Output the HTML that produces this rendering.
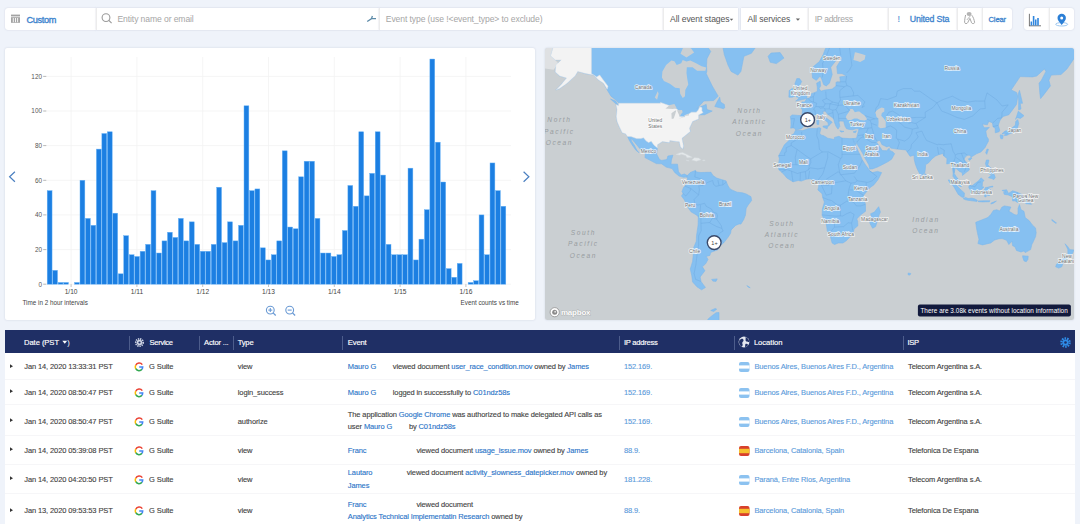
<!DOCTYPE html><html><head><meta charset="utf-8"><style>
*{margin:0;padding:0;box-sizing:border-box}
html,body{width:1080px;height:524px;overflow:hidden;background:#eff3fa;font-family:"Liberation Sans",sans-serif;position:relative}
.abs{position:absolute}
.seg{position:absolute;top:7.5px;height:22px;background:#fff;box-shadow:0 0 1.5px rgba(120,130,160,.35)}
.t{position:absolute;white-space:nowrap;line-height:1}
.panel{position:absolute;background:#fff;border-radius:2px;box-shadow:0 0 2px rgba(120,130,160,.3)}
.hdiv{position:absolute;top:335.5px;width:1px;height:14px;background:#4d5d8c}
.lnk{color:#2a74c8}
.rsep{position:absolute;left:5px;width:1070px;height:1px;background:#f6f6f8}
</style></head><body><div class="seg" style="left:4.6px;width:91px;border-radius:3px 0 0 3px;"></div><div class="seg" style="left:95.6px;width:283.8px;border-radius:0;border-left:1px solid #ececec;"></div><div class="seg" style="left:379.4px;width:283.6px;border-radius:0;border-left:1px solid #ececec;"></div><div class="seg" style="left:663px;width:75px;border-radius:0;border-left:1px solid #ececec;"></div><div class="seg" style="left:741px;width:66.8px;border-radius:0;"></div><div class="seg" style="left:807.8px;width:80.4px;border-radius:0;border-left:1px solid #ececec;"></div><div class="seg" style="left:888.2px;width:68.8px;border-radius:0;border-left:1px solid #ececec;"></div><div class="seg" style="left:957px;width:24.5px;border-radius:0;border-left:1px solid #ececec;"></div><div class="seg" style="left:981.5px;width:30.5px;border-radius:0 3px 3px 0;border-left:1px solid #ececec;"></div><div class="seg" style="left:1023.6px;width:25.1px;border-radius:3px 0 0 3px;"></div><div class="seg" style="left:1048.7px;width:25.3px;border-radius:0 3px 3px 0;border-left:1px solid #ececec;"></div><svg class="abs" style="left:0;top:0" width="1080" height="40" viewBox="0 0 1080 40">
 <rect x="11" y="14.6" width="9" height="1.8" fill="#a3a3a3"/>
 <rect x="11" y="17.2" width="9" height="5.6" fill="#a3a3a3"/>
 <rect x="12.8" y="18" width="0.9" height="4.2" fill="#fff"/><rect x="15" y="18" width="0.9" height="4.2" fill="#fff"/><rect x="17.2" y="18" width="0.9" height="4.2" fill="#fff"/>
 <circle cx="106" cy="17.6" r="3.9" fill="none" stroke="#9a9a9a" stroke-width="1.1"/>
 <line x1="108.8" y1="20.4" x2="111.6" y2="23.2" stroke="#9a9a9a" stroke-width="1.2"/>
 <path d="M367.2,21.5 L371.5,18.6 L376,18.6 M371.5,18.6 L372.4,16" fill="none" stroke="#5c8aa8" stroke-width="1.3"/>
 <path d="M965.6,15 C965,17.5 964.6,20.5 964.6,22.4 C964.6,23.8 967.2,24 967.6,22.8 L969.9,18.4 L971.6,22.8 C972,24 974.6,23.8 974.6,22.4 C974.3,20 973.2,17 971.8,15.2" fill="none" stroke="#a8a8a8" stroke-width="1"/>
 <path d="M966.8,20 L970.6,15.6" stroke="#b0b0b0" stroke-width="0.9"/>
 <ellipse cx="969.1" cy="14" rx="2.5" ry="2" fill="#b3b3b3"/>
 <line x1="1029.4" y1="13.8" x2="1029.4" y2="26.2" stroke="#555" stroke-width="0.8"/>
 <line x1="1029.4" y1="25.8" x2="1041" y2="25.8" stroke="#555" stroke-width="0.8"/>
 <rect x="1030.6" y="21.5" width="1.5" height="4" fill="#2f86de"/>
 <rect x="1032.8" y="16" width="1.6" height="9.5" fill="#2f86de"/>
 <rect x="1035" y="19.5" width="1.5" height="6" fill="#2f86de"/>
 <rect x="1037.2" y="18" width="1.6" height="7.5" fill="#2f86de"/>
 <ellipse cx="1061.7" cy="24.3" rx="6" ry="1.7" fill="none" stroke="#9cc7f0" stroke-width="1"/>
 <path d="M1061.7,25 C1059.5,22 1057.5,20.3 1057.5,18 A4.2,4.2 0 0 1 1065.9,18 C1065.9,20.3 1063.9,22 1061.7,25 Z" fill="#2b7fd6"/>
 <circle cx="1061.7" cy="18" r="1.5" fill="#fff"/>
 <path d="M729.8,18.8 L733.2,18.8 L731.5,20.8Z" fill="#666"/>
 <path d="M795.8,18.4 L800,18.4 L797.9,20.8Z" fill="#666"/>
</svg><div class="t" style="top:15.71px;font-size:9.2px;color:#3c83cd;left:26.40px;letter-spacing:-0.350px;-webkit-text-stroke:0.35px #3c83cd;">Custom</div><div class="t" style="top:14.92px;font-size:8.6px;color:#a6a6a6;left:117.50px;letter-spacing:-0.109px;">Entity name or email</div><div class="t" style="top:14.92px;font-size:8.6px;color:#a6a6a6;left:385.80px;letter-spacing:-0.107px;">Event type (use !&lt;event_type&gt; to exclude)</div><div class="t" style="top:14.92px;font-size:8.6px;color:#555;left:670.10px;letter-spacing:-0.082px;">All event stages</div><div class="t" style="top:14.92px;font-size:8.6px;color:#555;left:747.60px;letter-spacing:-0.074px;">All services</div><div class="t" style="top:14.92px;font-size:8.6px;color:#a6a6a6;left:814.70px;letter-spacing:-0.295px;">IP address</div><div class="t" style="top:14.81px;font-size:9.2px;color:#3c83cd;left:897.60px;">!</div><div class="t" style="top:14.65px;font-size:8.8px;color:#3c83cd;left:909.80px;letter-spacing:-0.169px;-webkit-text-stroke:0.3px #3c83cd;">United Sta</div><div class="t" style="top:15.87px;font-size:7.6px;color:#3c83cd;left:988.50px;letter-spacing:-0.133px;-webkit-text-stroke:0.3px #3c83cd;">Clear</div><div class="panel" style="left:4.6px;top:47.9px;width:530.6px;height:272.3px"></div><svg class="abs" style="left:0;top:0" width="1080" height="330" viewBox="0 0 1080 330" font-family="Liberation Sans, sans-serif"><line x1="47" y1="284.2" x2="511" y2="284.2" stroke="#f2f2f2" stroke-width="0.8"/><line x1="47" y1="249.6" x2="511" y2="249.6" stroke="#f2f2f2" stroke-width="0.8"/><line x1="47" y1="214.9" x2="511" y2="214.9" stroke="#f2f2f2" stroke-width="0.8"/><line x1="47" y1="180.3" x2="511" y2="180.3" stroke="#f2f2f2" stroke-width="0.8"/><line x1="47" y1="145.6" x2="511" y2="145.6" stroke="#f2f2f2" stroke-width="0.8"/><line x1="47" y1="111.0" x2="511" y2="111.0" stroke="#f2f2f2" stroke-width="0.8"/><line x1="47" y1="76.4" x2="511" y2="76.4" stroke="#f2f2f2" stroke-width="0.8"/><line x1="71.1" y1="57" x2="71.1" y2="284.2" stroke="#f2f2f2" stroke-width="0.8"/><line x1="136.9" y1="57" x2="136.9" y2="284.2" stroke="#f2f2f2" stroke-width="0.8"/><line x1="202.7" y1="57" x2="202.7" y2="284.2" stroke="#f2f2f2" stroke-width="0.8"/><line x1="268.5" y1="57" x2="268.5" y2="284.2" stroke="#f2f2f2" stroke-width="0.8"/><line x1="334.3" y1="57" x2="334.3" y2="284.2" stroke="#f2f2f2" stroke-width="0.8"/><line x1="400.1" y1="57" x2="400.1" y2="284.2" stroke="#f2f2f2" stroke-width="0.8"/><line x1="465.9" y1="57" x2="465.9" y2="284.2" stroke="#f2f2f2" stroke-width="0.8"/><rect x="47.20" y="190.67" width="4.85" height="93.53" fill="#1c7fe2" stroke="#66b2f7" stroke-width="0.45"/><rect x="52.67" y="270.34" width="4.85" height="13.86" fill="#1c7fe2" stroke="#66b2f7" stroke-width="0.45"/><rect x="58.13" y="282.47" width="4.85" height="1.73" fill="#1c7fe2" stroke="#66b2f7" stroke-width="0.45"/><rect x="63.60" y="282.47" width="4.85" height="1.73" fill="#1c7fe2" stroke="#66b2f7" stroke-width="0.45"/><rect x="74.53" y="282.47" width="4.85" height="1.73" fill="#1c7fe2" stroke="#66b2f7" stroke-width="0.45"/><rect x="80.00" y="180.28" width="4.85" height="103.92" fill="#1c7fe2" stroke="#66b2f7" stroke-width="0.45"/><rect x="85.47" y="218.38" width="4.85" height="65.82" fill="#1c7fe2" stroke="#66b2f7" stroke-width="0.45"/><rect x="90.94" y="225.31" width="4.85" height="58.89" fill="#1c7fe2" stroke="#66b2f7" stroke-width="0.45"/><rect x="96.40" y="149.10" width="4.85" height="135.10" fill="#1c7fe2" stroke="#66b2f7" stroke-width="0.45"/><rect x="101.87" y="133.52" width="4.85" height="150.68" fill="#1c7fe2" stroke="#66b2f7" stroke-width="0.45"/><rect x="107.34" y="131.78" width="4.85" height="152.42" fill="#1c7fe2" stroke="#66b2f7" stroke-width="0.45"/><rect x="112.80" y="213.19" width="4.85" height="71.01" fill="#1c7fe2" stroke="#66b2f7" stroke-width="0.45"/><rect x="118.27" y="273.81" width="4.85" height="10.39" fill="#1c7fe2" stroke="#66b2f7" stroke-width="0.45"/><rect x="123.74" y="235.70" width="4.85" height="48.50" fill="#1c7fe2" stroke="#66b2f7" stroke-width="0.45"/><rect x="129.20" y="254.76" width="4.85" height="29.44" fill="#1c7fe2" stroke="#66b2f7" stroke-width="0.45"/><rect x="134.67" y="256.49" width="4.85" height="27.71" fill="#1c7fe2" stroke="#66b2f7" stroke-width="0.45"/><rect x="140.14" y="251.29" width="4.85" height="32.91" fill="#1c7fe2" stroke="#66b2f7" stroke-width="0.45"/><rect x="145.61" y="244.36" width="4.85" height="39.84" fill="#1c7fe2" stroke="#66b2f7" stroke-width="0.45"/><rect x="151.07" y="190.67" width="4.85" height="93.53" fill="#1c7fe2" stroke="#66b2f7" stroke-width="0.45"/><rect x="156.54" y="253.02" width="4.85" height="31.18" fill="#1c7fe2" stroke="#66b2f7" stroke-width="0.45"/><rect x="162.01" y="240.90" width="4.85" height="43.30" fill="#1c7fe2" stroke="#66b2f7" stroke-width="0.45"/><rect x="167.47" y="232.24" width="4.85" height="51.96" fill="#1c7fe2" stroke="#66b2f7" stroke-width="0.45"/><rect x="172.94" y="237.44" width="4.85" height="46.76" fill="#1c7fe2" stroke="#66b2f7" stroke-width="0.45"/><rect x="178.41" y="218.38" width="4.85" height="65.82" fill="#1c7fe2" stroke="#66b2f7" stroke-width="0.45"/><rect x="183.87" y="240.90" width="4.85" height="43.30" fill="#1c7fe2" stroke="#66b2f7" stroke-width="0.45"/><rect x="189.34" y="221.85" width="4.85" height="62.35" fill="#1c7fe2" stroke="#66b2f7" stroke-width="0.45"/><rect x="194.81" y="244.36" width="4.85" height="39.84" fill="#1c7fe2" stroke="#66b2f7" stroke-width="0.45"/><rect x="200.28" y="251.29" width="4.85" height="32.91" fill="#1c7fe2" stroke="#66b2f7" stroke-width="0.45"/><rect x="205.74" y="251.29" width="4.85" height="32.91" fill="#1c7fe2" stroke="#66b2f7" stroke-width="0.45"/><rect x="211.21" y="244.36" width="4.85" height="39.84" fill="#1c7fe2" stroke="#66b2f7" stroke-width="0.45"/><rect x="216.68" y="187.21" width="4.85" height="96.99" fill="#1c7fe2" stroke="#66b2f7" stroke-width="0.45"/><rect x="222.14" y="242.63" width="4.85" height="41.57" fill="#1c7fe2" stroke="#66b2f7" stroke-width="0.45"/><rect x="227.61" y="221.85" width="4.85" height="62.35" fill="#1c7fe2" stroke="#66b2f7" stroke-width="0.45"/><rect x="233.08" y="240.90" width="4.85" height="43.30" fill="#1c7fe2" stroke="#66b2f7" stroke-width="0.45"/><rect x="238.54" y="225.31" width="4.85" height="58.89" fill="#1c7fe2" stroke="#66b2f7" stroke-width="0.45"/><rect x="244.01" y="105.80" width="4.85" height="178.40" fill="#1c7fe2" stroke="#66b2f7" stroke-width="0.45"/><rect x="249.48" y="190.67" width="4.85" height="93.53" fill="#1c7fe2" stroke="#66b2f7" stroke-width="0.45"/><rect x="254.95" y="188.94" width="4.85" height="95.26" fill="#1c7fe2" stroke="#66b2f7" stroke-width="0.45"/><rect x="260.41" y="247.83" width="4.85" height="36.37" fill="#1c7fe2" stroke="#66b2f7" stroke-width="0.45"/><rect x="265.88" y="259.95" width="4.85" height="24.25" fill="#1c7fe2" stroke="#66b2f7" stroke-width="0.45"/><rect x="271.35" y="254.76" width="4.85" height="29.44" fill="#1c7fe2" stroke="#66b2f7" stroke-width="0.45"/><rect x="276.81" y="240.90" width="4.85" height="43.30" fill="#1c7fe2" stroke="#66b2f7" stroke-width="0.45"/><rect x="282.28" y="150.84" width="4.85" height="133.36" fill="#1c7fe2" stroke="#66b2f7" stroke-width="0.45"/><rect x="287.75" y="227.04" width="4.85" height="57.16" fill="#1c7fe2" stroke="#66b2f7" stroke-width="0.45"/><rect x="293.22" y="228.78" width="4.85" height="55.42" fill="#1c7fe2" stroke="#66b2f7" stroke-width="0.45"/><rect x="298.68" y="176.82" width="4.85" height="107.38" fill="#1c7fe2" stroke="#66b2f7" stroke-width="0.45"/><rect x="304.15" y="161.23" width="4.85" height="122.97" fill="#1c7fe2" stroke="#66b2f7" stroke-width="0.45"/><rect x="309.62" y="161.23" width="4.85" height="122.97" fill="#1c7fe2" stroke="#66b2f7" stroke-width="0.45"/><rect x="315.08" y="218.38" width="4.85" height="65.82" fill="#1c7fe2" stroke="#66b2f7" stroke-width="0.45"/><rect x="320.55" y="253.02" width="4.85" height="31.18" fill="#1c7fe2" stroke="#66b2f7" stroke-width="0.45"/><rect x="326.02" y="253.02" width="4.85" height="31.18" fill="#1c7fe2" stroke="#66b2f7" stroke-width="0.45"/><rect x="331.48" y="256.49" width="4.85" height="27.71" fill="#1c7fe2" stroke="#66b2f7" stroke-width="0.45"/><rect x="336.95" y="254.76" width="4.85" height="29.44" fill="#1c7fe2" stroke="#66b2f7" stroke-width="0.45"/><rect x="342.42" y="230.51" width="4.85" height="53.69" fill="#1c7fe2" stroke="#66b2f7" stroke-width="0.45"/><rect x="347.89" y="185.48" width="4.85" height="98.72" fill="#1c7fe2" stroke="#66b2f7" stroke-width="0.45"/><rect x="353.35" y="206.26" width="4.85" height="77.94" fill="#1c7fe2" stroke="#66b2f7" stroke-width="0.45"/><rect x="358.82" y="131.78" width="4.85" height="152.42" fill="#1c7fe2" stroke="#66b2f7" stroke-width="0.45"/><rect x="364.29" y="195.87" width="4.85" height="88.33" fill="#1c7fe2" stroke="#66b2f7" stroke-width="0.45"/><rect x="369.75" y="173.35" width="4.85" height="110.85" fill="#1c7fe2" stroke="#66b2f7" stroke-width="0.45"/><rect x="375.22" y="131.78" width="4.85" height="152.42" fill="#1c7fe2" stroke="#66b2f7" stroke-width="0.45"/><rect x="380.69" y="175.08" width="4.85" height="109.12" fill="#1c7fe2" stroke="#66b2f7" stroke-width="0.45"/><rect x="386.15" y="244.36" width="4.85" height="39.84" fill="#1c7fe2" stroke="#66b2f7" stroke-width="0.45"/><rect x="391.62" y="254.76" width="4.85" height="29.44" fill="#1c7fe2" stroke="#66b2f7" stroke-width="0.45"/><rect x="397.09" y="254.76" width="4.85" height="29.44" fill="#1c7fe2" stroke="#66b2f7" stroke-width="0.45"/><rect x="402.56" y="254.76" width="4.85" height="29.44" fill="#1c7fe2" stroke="#66b2f7" stroke-width="0.45"/><rect x="408.02" y="168.16" width="4.85" height="116.04" fill="#1c7fe2" stroke="#66b2f7" stroke-width="0.45"/><rect x="413.49" y="259.95" width="4.85" height="24.25" fill="#1c7fe2" stroke="#66b2f7" stroke-width="0.45"/><rect x="418.96" y="239.17" width="4.85" height="45.03" fill="#1c7fe2" stroke="#66b2f7" stroke-width="0.45"/><rect x="424.42" y="209.72" width="4.85" height="74.48" fill="#1c7fe2" stroke="#66b2f7" stroke-width="0.45"/><rect x="429.89" y="59.04" width="4.85" height="225.16" fill="#1c7fe2" stroke="#66b2f7" stroke-width="0.45"/><rect x="435.36" y="142.18" width="4.85" height="142.02" fill="#1c7fe2" stroke="#66b2f7" stroke-width="0.45"/><rect x="440.82" y="182.01" width="4.85" height="102.19" fill="#1c7fe2" stroke="#66b2f7" stroke-width="0.45"/><rect x="446.29" y="268.61" width="4.85" height="15.59" fill="#1c7fe2" stroke="#66b2f7" stroke-width="0.45"/><rect x="451.76" y="277.27" width="4.85" height="6.93" fill="#1c7fe2" stroke="#66b2f7" stroke-width="0.45"/><rect x="457.23" y="263.42" width="4.85" height="20.78" fill="#1c7fe2" stroke="#66b2f7" stroke-width="0.45"/><rect x="468.16" y="282.47" width="4.85" height="1.73" fill="#1c7fe2" stroke="#66b2f7" stroke-width="0.45"/><rect x="473.63" y="280.74" width="4.85" height="3.46" fill="#1c7fe2" stroke="#66b2f7" stroke-width="0.45"/><rect x="479.09" y="214.92" width="4.85" height="69.28" fill="#1c7fe2" stroke="#66b2f7" stroke-width="0.45"/><rect x="484.56" y="254.76" width="4.85" height="29.44" fill="#1c7fe2" stroke="#66b2f7" stroke-width="0.45"/><rect x="490.03" y="162.96" width="4.85" height="121.24" fill="#1c7fe2" stroke="#66b2f7" stroke-width="0.45"/><rect x="495.49" y="190.67" width="4.85" height="93.53" fill="#1c7fe2" stroke="#66b2f7" stroke-width="0.45"/><rect x="500.96" y="206.26" width="4.85" height="77.94" fill="#1c7fe2" stroke="#66b2f7" stroke-width="0.45"/><text x="42" y="286.5" text-anchor="end" font-size="6.4" fill="#555">0</text><line x1="43.2" y1="284.2" x2="46.4" y2="284.2" stroke="#888" stroke-width="0.6"/><text x="42" y="251.9" text-anchor="end" font-size="6.4" fill="#555">20</text><line x1="43.2" y1="249.6" x2="46.4" y2="249.6" stroke="#888" stroke-width="0.6"/><text x="42" y="217.2" text-anchor="end" font-size="6.4" fill="#555">40</text><line x1="43.2" y1="214.9" x2="46.4" y2="214.9" stroke="#888" stroke-width="0.6"/><text x="42" y="182.6" text-anchor="end" font-size="6.4" fill="#555">60</text><line x1="43.2" y1="180.3" x2="46.4" y2="180.3" stroke="#888" stroke-width="0.6"/><text x="42" y="147.9" text-anchor="end" font-size="6.4" fill="#555">80</text><line x1="43.2" y1="145.6" x2="46.4" y2="145.6" stroke="#888" stroke-width="0.6"/><text x="42" y="113.3" text-anchor="end" font-size="6.4" fill="#555">100</text><line x1="43.2" y1="111.0" x2="46.4" y2="111.0" stroke="#888" stroke-width="0.6"/><text x="42" y="78.7" text-anchor="end" font-size="6.4" fill="#555">120</text><line x1="43.2" y1="76.4" x2="46.4" y2="76.4" stroke="#888" stroke-width="0.6"/><line x1="71.1" y1="284.2" x2="71.1" y2="287" stroke="#999" stroke-width="0.6"/><text x="71.1" y="294.2" text-anchor="middle" font-size="6.6" fill="#444">1/10</text><line x1="136.9" y1="284.2" x2="136.9" y2="287" stroke="#999" stroke-width="0.6"/><text x="136.9" y="294.2" text-anchor="middle" font-size="6.6" fill="#444">1/11</text><line x1="202.7" y1="284.2" x2="202.7" y2="287" stroke="#999" stroke-width="0.6"/><text x="202.7" y="294.2" text-anchor="middle" font-size="6.6" fill="#444">1/12</text><line x1="268.5" y1="284.2" x2="268.5" y2="287" stroke="#999" stroke-width="0.6"/><text x="268.5" y="294.2" text-anchor="middle" font-size="6.6" fill="#444">1/13</text><line x1="334.3" y1="284.2" x2="334.3" y2="287" stroke="#999" stroke-width="0.6"/><text x="334.3" y="294.2" text-anchor="middle" font-size="6.6" fill="#444">1/14</text><line x1="400.1" y1="284.2" x2="400.1" y2="287" stroke="#999" stroke-width="0.6"/><text x="400.1" y="294.2" text-anchor="middle" font-size="6.6" fill="#444">1/15</text><line x1="465.9" y1="284.2" x2="465.9" y2="287" stroke="#999" stroke-width="0.6"/><text x="465.9" y="294.2" text-anchor="middle" font-size="6.6" fill="#444">1/16</text><text x="22.5" y="305" font-size="6.3" fill="#444" letter-spacing="0.003">Time in 2 hour intervals</text><text x="460.6" y="305" font-size="6.3" fill="#444" letter-spacing="-0.001">Event counts vs time</text><polyline points="14.9,171.8 9.6,176.8 14.9,181.8" fill="none" stroke="#4a7fc0" stroke-width="1.2"/><polyline points="523.6,171.8 528.9,176.8 523.6,181.8" fill="none" stroke="#4a7fc0" stroke-width="1.2"/><circle cx="270.3" cy="310.1" r="3.9" fill="none" stroke="#6a9ad4" stroke-width="1.1"/><line x1="273.1" y1="312.90000000000003" x2="275.7" y2="315.5" stroke="#6a9ad4" stroke-width="1.3"/><line x1="268.3" y1="310.1" x2="272.3" y2="310.1" stroke="#6a9ad4" stroke-width="1.1"/><line x1="270.3" y1="308.1" x2="270.3" y2="312.1" stroke="#6a9ad4" stroke-width="1.1"/><circle cx="289.7" cy="310.1" r="3.9" fill="none" stroke="#6a9ad4" stroke-width="1.1"/><line x1="292.5" y1="312.90000000000003" x2="295.09999999999997" y2="315.5" stroke="#6a9ad4" stroke-width="1.3"/><line x1="287.7" y1="310.1" x2="291.7" y2="310.1" stroke="#6a9ad4" stroke-width="1.1"/></svg><div class="abs" style="left:544.6px;top:48px;width:529.1px;height:271.5px;border-radius:2.5px;overflow:hidden;box-shadow:0 0 2px rgba(120,130,160,.3)"><svg width="529.1" height="271.5" viewBox="544.6 48 529.1 271.5" font-family="Liberation Sans, sans-serif"><rect x="540" y="40" width="540" height="290" fill="#cacfd2"/><path d="M550.2,55.9L553.2,45.5L567.1,32.4L591.0,40.0L615.1,29.0L698.2,29.0L704.2,42.6L710.3,51.4L706.5,58.8L706.1,65.6L706.4,71.4L705.8,73.6L711.8,85.9L717.8,96.2L713.3,100.5L703.5,101.0L696.7,108.3L705.8,104.4L706.5,109.6L711.8,111.1L704.2,114.7L698.2,114.9L698.2,119.0L692.2,121.4L689.1,128.2L689.9,131.6L681.6,138.2L683.1,146.0L682.3,149.1L680.1,146.9L678.9,141.8L675.5,141.4L669.5,140.5L669.1,142.6L662.0,141.6L657.1,144.7L656.7,150.2L656.2,154.0L659.1,159.5L661.2,160.4L666.5,159.5L667.5,156.0L672.5,155.2L671.0,160.0L670.6,164.2L677.1,164.2L678.1,171.7L680.8,175.1L683.9,174.0L686.9,175.5L686.1,177.0L683.1,177.3L678.6,176.0L674.3,172.5L671.8,168.6L665.7,167.1L661.2,163.8L655.9,163.6L644.6,157.6L644.9,153.0L643.1,152.4L638.7,147.7L634.5,142.6L630.6,138.1L631.0,140.9L633.7,145.0L636.7,150.6L638.6,152.7L635.5,150.2L631.6,144.7L629.0,140.4L627.1,136.5L625.0,133.8L621.8,132.7L618.9,126.7L616.7,121.6L615.9,116.4L616.7,109.6L615.6,104.7L618.2,105.6L618.2,102.8L615.1,99.8L610.6,96.2L606.8,89.9L603.1,83.2L597.8,79.8L593.3,75.1L585.0,73.6L577.4,71.4L574.7,76.0L571.4,78.9L566.8,83.2L559.3,88.6L555.5,89.9L560.8,84.5L566.1,78.0L559.3,76.0L554.8,72.0L555.5,65.0L560.8,59.9L554.8,59.9ZM693.7,-6.5L704.2,7.0L716.3,10.0L720.9,29.0L720.9,38.3L723.9,54.5L727.6,65.0L730.7,71.4L737.5,75.1L740.5,71.4L743.5,56.3L751.0,53.3L755.6,46.7L766.1,38.3L770.7,29.0L773.7,13.0L776.7,-22.3L743.5,-53.3L713.3,-41.7ZM714.4,106.5L716.3,102.6L719.3,97.2L720.1,102.1L723.9,104.4L724.3,107.8L723.0,108.7L719.6,107.8ZM686.9,175.5L689.9,172.5L694.9,170.5L696.2,172.0L700.5,172.5L707.3,172.3L710.6,172.3L712.5,175.5L716.3,178.1L720.9,179.5L725.4,180.8L727.6,185.7L729.2,188.4L731.4,189.9L736.7,192.2L742.0,192.8L745.8,194.0L750.6,196.7L751.2,200.5L747.7,205.1L745.8,208.2L745.0,215.2L743.2,219.7L740.5,224.1L738.7,223.9L735.2,225.4L730.7,229.9L730.2,233.3L727.6,237.3L724.6,241.2L723.1,243.0L720.9,244.7L718.9,244.7L715.7,243.0L717.1,247.1L717.8,249.6L710.3,252.4L709.5,255.4L705.8,256.4L707.6,259.4L705.4,263.6L702.0,266.8L704.5,270.8L699.7,277.0L700.6,281.4L705.0,287.5L701.2,289.8L696.7,286.9L692.2,281.9L691.4,275.8L689.9,269.0L692.2,261.5L692.9,254.4L692.9,248.6L695.9,241.2L696.1,235.9L697.7,224.9L697.9,216.8L695.9,214.9L690.6,211.8L688.7,209.0L687.3,206.7L683.9,199.8L681.1,196.0L682.6,193.5L681.6,191.4L683.1,187.6L684.6,186.1L687.0,182.7L687.2,177.8L686.3,177.5ZM788.8,29.0L1075.7,29.0L1075.7,56.3L1072.7,59.9L1066.6,68.9L1060.6,74.5L1050.8,75.1L1048.5,80.3L1050.0,85.9L1047.0,89.9L1043.2,94.9L1040.2,98.6L1039.5,93.7L1038.7,83.2L1041.0,80.3L1045.5,71.4L1044.0,68.9L1036.4,76.0L1031.9,76.9L1019.8,76.6L1010.8,89.9L1016.1,92.4L1017.4,96.2L1016.1,104.4L1008.5,114.7L1002.9,116.4L1001.3,117.8L999.4,120.8L997.9,125.3L999.3,130.1L998.7,131.7L994.9,132.8L994.8,128.2L992.6,126.7L992.2,123.0L987.4,120.8L988.4,121.4L986.9,124.8L981.9,124.0L983.6,127.8L988.9,127.4L985.4,131.0L986.3,136.5L988.0,139.1L988.0,141.2L984.5,147.7L980.6,151.9L976.0,153.8L970.8,157.1L969.5,155.2L967.0,155.2L964.7,157.1L963.7,159.5L968.2,165.2L968.9,170.1L965.5,172.6L962.1,175.4L961.8,172.5L959.4,171.7L956.4,169.1L954.9,167.8L953.7,173.2L955.4,176.0L956.9,178.0L960.0,181.6L961.2,186.4L959.9,186.4L956.9,184.2L955.4,180.4L952.5,176.1L952.8,173.2L951.4,163.1L946.3,163.9L946.6,158.4L943.4,156.0L942.5,153.5L938.3,154.7L935.1,156.0L931.5,158.9L928.0,163.0L925.2,164.6L925.0,168.6L924.4,172.8L920.9,176.1L919.0,173.2L916.8,168.9L914.9,163.9L913.8,159.2L913.7,155.2L909.6,156.3L907.8,153.5L905.4,149.9L896.8,149.1L890.4,148.1L888.9,145.9L886.5,146.9L881.5,144.5L879.7,140.5L877.1,140.9L876.4,142.6L878.8,146.0L880.6,148.6L881.8,150.6L886.2,150.7L888.9,148.2L888.9,150.2L892.5,151.9L894.2,153.8L891.2,159.2L887.7,161.6L882.7,164.2L877.1,167.1L871.9,168.9L869.3,169.1L868.4,164.7L864.3,157.6L862.8,154.3L859.0,147.7L856.8,144.3L856.6,141.8L855.5,144.7L853.1,141.1L852.7,138.6L856.1,138.2L856.8,135.6L858.1,131.0L858.6,129.0L856.0,128.6L852.2,129.7L849.2,129.5L846.2,128.8L844.7,126.3L843.6,122.8L843.5,121.2L840.1,121.0L838.5,121.4L839.4,126.3L837.6,129.1L835.9,126.7L834.4,123.2L833.2,118.8L831.1,117.0L827.3,114.3L824.7,111.1L822.5,111.5L822.8,114.3L825.0,117.4L828.1,119.6L831.8,122.2L829.6,124.4L828.1,126.3L827.6,122.4L825.0,120.4L822.3,118.8L819.8,116.4L817.3,113.4L815.2,114.7L811.4,115.7L808.6,117.4L808.7,118.6L805.3,120.4L803.4,123.4L803.9,124.8L802.8,127.1L800.7,128.8L795.4,130.1L794.4,128.6L792.7,127.8L790.3,128.2L790.6,124.9L790.5,120.0L789.9,116.4L791.8,114.9L798.6,115.5L801.6,115.5L802.1,110.0L800.1,107.1L796.8,104.9L801.6,104.0L801.5,101.9L804.2,102.1L806.3,98.8L809.9,97.6L811.0,93.7L814.5,92.4L816.9,91.4L816.9,87.2L816.3,83.2L819.8,81.2L820.2,85.9L818.7,88.6L820.5,91.2L824.3,90.1L831.8,89.1L835.6,85.9L835.6,82.3L840.1,82.6L839.4,76.9L846.2,76.0L841.6,73.6L837.1,73.6L836.4,66.6L841.6,58.1L837.1,55.2L835.6,60.6L830.3,67.3L831.8,74.5L829.0,83.2L825.8,85.9L823.2,84.5L821.6,79.8L819.8,76.0L816.0,80.3L812.2,78.0L811.4,69.8L813.0,66.6L819.0,61.6L822.8,54.5L825.0,48.7L828.1,44.7L834.1,38.3ZM852.7,138.6L849.2,138.6L841.6,138.1L838.6,136.3L834.1,137.4L834.1,139.5L827.3,138.2L823.5,135.8L820.5,135.0L819.3,133.2L820.5,128.4L818.7,127.6L816.0,128.4L808.4,128.6L802.4,130.6L795.0,130.4L793.5,133.8L791.1,135.0L789.1,140.0L784.0,144.8L778.2,156.0L779.0,158.4L777.9,166.0L778.5,169.7L781.2,172.0L783.8,174.8L786.5,178.0L792.6,181.8L797.9,180.5L800.9,181.1L805.9,179.2L810.7,178.7L813.0,181.9L817.0,181.6L818.5,183.1L818.2,186.9L817.5,189.9L821.7,193.7L822.3,197.5L824.0,202.0L822.0,209.0L821.7,215.2L825.8,223.3L826.9,230.8L829.6,235.0L831.7,243.0L834.1,244.5L837.9,243.0L842.6,243.0L846.2,240.5L850.6,235.7L853.1,231.6L853.6,229.1L857.5,225.7L857.2,221.2L856.4,218.9L859.8,215.2L865.1,211.3L865.1,204.3L863.2,199.0L863.1,195.4L866.7,191.0L869.6,187.6L873.4,184.9L877.9,179.3L881.2,172.6L877.1,171.4L871.9,172.6L869.3,170.8L867.9,168.6L865.2,165.0L862.0,160.0L860.2,156.0L857.8,151.2L856.0,147.1L853.1,141.1ZM878.3,206.7L880.0,212.1L878.6,215.2L877.4,219.2L875.2,226.6L872.2,228.2L869.9,224.1L869.3,221.6L870.9,216.8L870.3,213.7L874.1,212.1L876.4,209.0ZM975.3,222.5L976.3,229.1L977.5,235.0L978.6,239.4L977.5,243.6L982.1,244.9L990.4,242.9L994.2,240.0L998.7,238.7L1002.0,238.6L1006.2,240.3L1008.5,244.5L1011.5,241.2L1012.3,245.8L1014.5,246.7L1016.1,250.5L1020.6,252.0L1023.6,250.9L1024.8,252.6L1030.2,249.6L1031.6,244.0L1032.4,242.7L1035.1,236.8L1035.8,232.8L1035.1,227.9L1031.9,224.9L1028.9,220.8L1024.8,217.6L1023.6,211.3L1020.6,209.7L1019.1,204.6L1017.7,208.2L1017.6,213.7L1016.5,215.2L1013.8,214.5L1011.5,212.9L1008.5,211.3L1010.5,207.1L1004.0,205.9L1001.4,207.3L999.4,211.0L996.4,209.7L993.0,210.5L990.4,214.5L987.4,217.6L980.6,220.2L976.0,222.1ZM1022.2,255.8L1027.8,256.2L1027.5,259.4L1025.9,261.7L1023.6,260.9L1022.4,257.4ZM1064.7,243.8L1067.4,246.7L1069.5,249.7L1073.4,249.9L1072.5,252.8L1070.9,255.0L1068.5,257.4L1067.5,254.0L1067.4,249.2ZM1064.7,255.4L1067.1,257.8L1065.7,260.4L1064.7,261.9L1062.4,263.6L1061.4,266.8L1058.3,268.1L1055.3,266.8L1056.1,264.2L1058.0,262.5L1061.4,260.4L1062.9,257.8L1063.8,256.0ZM947.8,179.9L951.1,180.5L955.7,185.1L960.5,189.9L964.0,192.9L963.7,197.2L961.7,197.3L957.9,194.4L955.7,190.7L952.9,185.8L949.6,183.1ZM962.8,198.7L965.2,197.5L967.7,198.5L971.5,198.2L974.1,198.8L976.8,200.2L976.6,201.4L971.5,200.8L967.0,200.2L964.7,199.6ZM968.5,186.1L969.4,185.4L971.5,186.0L974.5,183.6L978.3,180.7L980.6,177.8L983.6,180.5L982.1,182.1L981.8,186.9L983.6,187.0L979.8,190.7L979.4,194.4L976.8,194.4L973.0,193.4L970.3,192.8L970.0,189.9L968.5,187.9ZM984.3,196.7L985.7,196.9L986.0,192.6L987.4,195.7L989.6,195.2L987.4,190.7L990.2,189.8L986.6,187.6L992.3,186.1L992.6,186.9L985.1,187.5L983.6,190.7L984.3,193.7ZM1001.7,190.4L1006.2,189.8L1008.1,193.4L1012.3,190.8L1016.8,192.3L1023.9,195.7L1026.6,197.5L1027.4,200.5L1031.2,204.3L1025.9,203.7L1021.3,200.2L1020.6,202.0L1016.8,202.2L1014.5,200.8L1012.3,201.0L1012.0,196.7L1007.8,194.9L1004.0,194.4L1003.2,192.6L1005.5,191.9L1002.0,190.7ZM991.1,202.8L996.0,201.1L992.6,203.4L990.4,204.0ZM977.5,201.0L983.6,200.8L989.6,200.8L988.9,201.7L982.1,201.9L978.3,201.7ZM986.0,160.0L988.4,160.0L988.1,162.3L987.4,164.7L989.3,167.1L991.1,169.1L990.4,167.8L987.7,167.4L986.0,166.6L985.1,163.5ZM988.1,177.8L990.4,175.5L993.3,173.5L994.9,177.5L993.4,179.6L991.4,178.6ZM988.1,170.5L991.1,169.4L993.4,171.7L992.6,173.5L989.6,174.5L988.1,172.5ZM1001.6,133.8L1004.7,131.0L1009.3,130.6L1011.2,128.2L1015.0,125.3L1015.3,121.4L1017.4,119.6L1018.3,123.4L1016.5,130.1L1015.3,131.9L1013.8,132.3L1010.5,133.2L1007.8,134.5L1004.7,133.2L1002.5,133.9ZM1000.2,134.7L1002.8,135.6L1002.2,138.8L1000.5,138.8L999.7,135.9ZM1004.0,135.6L1004.7,133.8L1007.0,133.4L1007.0,135.2ZM1015.3,119.4L1017.9,111.3L1023.6,115.7L1020.1,118.4L1016.1,117.4ZM1018.3,110.0L1020.6,108.9L1019.8,103.3L1022.1,103.3L1019.1,90.4L1017.9,93.7L1018.3,101.0L1018.2,108.9ZM985.3,152.7L986.6,149.1L988.1,149.4L986.3,154.3ZM967.9,158.9L970.8,157.4L971.5,158.2L969.2,160.4ZM924.5,173.5L927.4,177.0L927.0,179.0L924.7,179.3L924.4,176.3ZM795.3,101.0L806.5,98.6L806.5,94.4L803.9,92.4L801.5,88.6L800.9,85.9L799.1,85.9L801.2,81.5L799.1,78.6L796.4,78.6L794.5,83.7L795.6,86.7L796.7,89.1L798.6,89.9L799.4,92.9L796.8,94.2L795.9,96.9L798.9,97.6L796.0,100.7ZM794.8,95.9L794.8,89.9L792.9,87.8L788.8,90.6L788.5,97.2L791.8,97.2ZM767.7,56.3L770.7,53.0L779.7,52.6L783.5,58.1L776.0,63.6L769.9,62.3ZM816.9,116.4L818.2,116.4L817.9,119.6L817.0,119.2ZM816.3,120.4L818.5,120.4L818.4,124.4L816.6,124.4ZM822.6,126.1L827.5,125.7L826.7,128.8L822.8,127.1ZM839.4,130.8L843.6,131.4L840.9,132.1ZM852.7,131.9L856.0,130.8L854.9,132.7ZM711.3,279.4L716.8,278.9L715.6,281.4L712.5,281.1ZM746.5,285.6L749.8,287.7L748.0,287.2ZM907.8,273.0L910.4,273.5L909.6,275.1L907.8,274.9ZM718.6,312.5L715.6,312.8L711.0,316.2L708.0,318.7L705.8,322.3L728.4,338.5L718.6,322.3ZM710.3,310.5L713.3,311.5L716.3,309.2L714.8,308.5ZM1051.5,219.5L1056.1,223.0L1055.3,223.3L1051.5,220.5ZM610.2,99.1L615.1,101.0L617.6,104.7L615.1,103.5Z" fill="#86c0f1" stroke="#7db8ec" stroke-width="0.6"/><path d="M675.5,154.5L679.3,152.9L682.3,152.5L686.9,154.7L691.9,157.3L686.6,157.7L685.4,155.6L680.8,154.2L679.3,155.0ZM691.4,160.1L694.0,157.7L698.2,158.1L700.6,159.8L695.9,161.2ZM685.7,160.1L688.8,160.8L687.6,161.1ZM702.4,160.0L704.8,160.1L704.2,160.8L702.4,160.8Z" fill="#e4e8ea" stroke="#d5dade" stroke-width="0.5"/><path d="M845.4,117.4L846.2,115.3L848.4,112.2L850.0,108.9L852.2,108.9L854.5,112.2L857.5,111.5L859.0,111.5L861.3,113.6L864.3,115.5L866.7,119.2L864.3,120.4L859.8,120.0L856.8,118.4L853.7,118.6L850.7,120.0L847.7,120.0L846.2,119.0ZM874.4,113.0L875.6,110.9L878.3,108.9L881.2,107.4L883.9,108.3L883.9,111.5L881.4,113.0L880.9,115.7L883.6,118.8L885.4,121.4L885.3,124.8L885.4,127.6L880.2,128.2L877.9,127.1L878.2,121.8L877.9,118.8L875.9,116.4L875.5,113.6ZM853.0,59.9L856.8,60.9L859.8,61.9L864.3,59.5L865.1,55.2L861.3,54.1L856.0,52.6L854.5,52.2L853.7,56.3ZM671.0,60.6L665.7,65.0L662.0,71.4L661.5,77.5L663.5,80.9L669.5,83.7L674.8,87.8L679.3,88.3L679.8,93.7L682.3,97.9L684.6,96.2L684.9,89.9L687.9,84.5L686.9,78.9L686.1,73.0L686.4,67.3L692.2,67.3L696.7,70.8L705.0,70.8L705.8,67.6L701.2,66.3L695.2,63.0L689.9,60.6L686.1,61.6L682.3,59.9L680.8,63.3L676.3,65.0L674.0,61.3ZM683.1,46.7L690.6,48.3L693.7,52.6L686.1,57.4L680.1,53.7Z" fill="#cacfd2"/><path d="M618.2,103.3L660.1,103.3L660.1,102.4L668.8,105.6L676.3,108.9L679.3,111.5L679.3,116.6L684.6,116.8L684.3,115.5L688.4,113.9L691.1,112.2L695.9,112.2L697.7,110.2L699.4,106.9L701.5,107.6L701.5,110.9L702.7,112.6L698.2,114.9L698.2,119.0L692.2,121.4L689.1,128.2L689.9,131.6L681.6,138.2L683.1,146.0L682.3,149.1L680.1,146.9L678.9,141.8L675.5,141.4L669.5,140.5L669.1,142.6L662.0,141.6L657.1,144.7L657.1,147.9L653.7,145.2L650.8,141.2L648.2,142.6L645.8,140.9L643.1,137.7L640.5,138.6L636.3,138.6L630.6,136.5L627.1,136.5L625.0,133.8L621.8,132.7L618.9,126.7L616.7,121.6L615.9,116.4L616.7,109.6L615.6,104.7L618.2,105.6ZM550.2,55.9L553.2,45.5L567.1,32.4L591.0,40.0L591.0,73.6L596.3,76.9L599.3,75.1L602.3,79.2L607.6,86.2L606.8,89.3L603.1,83.2L597.8,79.8L593.3,75.1L585.0,73.6L577.4,71.4L574.7,76.0L571.4,78.9L566.8,83.2L559.3,88.6L555.5,89.9L560.8,84.5L566.1,78.0L559.3,76.0L554.8,72.0L555.5,65.0L560.8,59.9L554.8,59.9Z" fill="#f3f3f3" stroke="#d8dde2" stroke-width="0.5"/><path d="M542.7,46.7L553.2,45.5L550.2,55.9L554.8,59.9L557.8,63.3L553.2,69.8L542.7,68.3Z" fill="#f3f3f3" fill-opacity="0.5"/><path d="M665.0,108.5L669.5,105.1L674.0,104.0L676.3,108.3L672.5,108.9L668.0,108.7ZM671.3,119.0L671.0,113.2L674.8,110.4L675.9,110.4L674.8,114.3L673.3,118.4ZM679.3,116.4L676.6,110.2L681.6,110.0L682.3,112.2L680.5,114.3ZM677.8,119.0L684.8,116.6L681.6,117.2ZM683.4,115.7L688.7,113.9L688.4,115.5ZM654.4,97.4L657.4,91.2L658.2,93.7L656.7,99.8Z" fill="#cacfd2"/><path d="M726.1,181.9L722.4,184.9L719.3,185.4L715.6,186.4L713.3,184.6L712.2,180.5L707.3,182.4L702.4,185.4L698.4,185.8L699.0,189.9L698.2,194.9L693.7,199.5L694.4,203.6L697.4,205.1L704.2,203.3L705.8,206.3L711.0,209.0L712.8,212.1L716.3,213.3L717.1,216.0L716.3,219.2L720.9,225.7L721.5,228.4L722.7,231.1L720.1,232.5L716.9,236.3L723.3,242.5M695.2,170.5L694.4,177.0L702.0,179.3L702.0,185.4M682.6,193.5L685.4,196.0L689.9,190.7L690.2,188.4L684.6,186.1M690.2,188.4L698.2,194.9M697.6,216.5L699.0,215.2L699.7,211.3L700.2,205.1M700.5,216.0L700.5,222.5L700.8,230.8L698.2,235.9L698.2,244.9L696.7,254.4L695.5,264.6L693.7,273.5L695.2,279.4L700.5,281.4M700.5,223.3L709.5,222.5L711.8,218.4L716.3,218.9M709.5,223.0L716.3,226.6L721.5,228.4M715.9,242.1L716.9,236.3M717.5,180.1L718.6,185.4M722.4,180.1L722.4,184.9M801.2,131.9L801.3,137.0L798.5,138.1L790.8,143.0L790.8,145.5L796.7,149.4L805.7,156.0L810.2,158.9L822.0,151.9L828.1,151.9L840.1,158.4L841.6,157.6L841.6,154.3M778.2,155.5L784.3,155.5L784.3,152.7L785.8,151.9L785.8,147.7L790.8,145.5M785.8,165.8L786.7,164.6L795.6,164.7L794.8,157.6L796.7,149.4M818.2,140.4L819.0,149.4L822.0,151.9M816.9,128.4L816.3,135.6L818.2,140.4M841.6,138.1L841.6,154.3L859.8,154.3M840.1,158.4L837.9,164.7L839.4,173.2L845.4,180.8L850.4,183.1L854.5,182.7L856.8,180.8L867.3,182.4L871.9,180.8L876.4,176.3M810.2,158.9L810.4,162.5L809.3,164.9L805.7,165.0L795.6,164.7M827.3,152.7L827.3,157.6L824.4,167.8L817.5,168.9L809.9,167.8L808.0,169.7L809.3,164.9M824.4,167.8L822.3,174.0L816.9,181.1M825.8,179.3L837.9,171.7L839.4,173.2M831.8,183.1L845.4,180.8M839.4,174.8L854.0,173.2L859.0,166.6L862.0,160.0M853.7,176.3L856.8,180.8M869.3,170.9L876.4,176.3M863.1,195.4L855.1,189.9L849.2,189.9M865.8,191.0L865.8,182.5M864.9,204.3L860.5,205.9L856.0,205.9L853.7,202.8L850.0,201.0L847.7,195.2L848.4,189.9L849.2,186.9L850.7,183.1M822.3,197.5L828.1,199.8L831.1,200.5L837.1,205.1L840.1,205.1L846.2,201.3L850.0,201.0M821.7,214.9L835.5,216.2L839.4,215.9L842.4,216.0L846.2,213.7L850.0,212.2L853.7,214.5L851.2,223.1L852.2,230.4M834.1,222.5L834.1,227.1L828.8,233.5M834.1,227.1L843.2,226.6L847.7,222.8L851.2,223.1M840.1,205.1L840.1,215.9M817.0,181.6L821.0,185.1L828.1,185.4L831.8,183.1M821.0,185.1L825.8,195.2L831.1,193.7L831.8,183.1M781.2,172.0L786.5,169.5L791.1,171.2L797.1,173.5L800.1,172.5L804.7,171.7L808.0,169.7M792.6,181.8L791.8,176.3L791.1,171.2M799.7,180.7L800.0,172.5M805.7,179.2L805.0,171.7M808.0,178.9L809.2,170.9M777.9,166.0L785.8,165.8M778.5,169.7L786.5,169.5M790.5,118.8L794.1,118.6L792.6,126.3L792.7,127.8M801.2,115.7L808.7,117.6M807.7,98.4L810.2,101.2L813.1,102.1L816.3,103.3L815.4,106.5L813.0,109.4L814.5,110.2L815.2,114.7M814.5,92.9L813.0,96.7L813.1,102.1M809.9,97.6L813.0,96.7M825.3,91.4L825.9,98.6L822.0,100.3L824.7,103.8L823.5,106.7L818.2,106.7L815.4,106.5M818.2,106.7L819.8,108.3L822.8,107.8L824.6,108.9L824.7,111.1M839.4,90.6L839.4,96.2L840.1,99.8L838.0,103.3L832.3,102.1L826.5,98.6L825.9,98.6M824.7,103.8L829.6,103.8L832.3,102.1M829.6,103.8L828.8,108.9L824.6,108.9M829.6,103.8L838.0,105.4L838.0,103.3M864.3,106.0L861.6,107.6L864.5,101.9L857.5,95.4L852.7,95.9L853.3,92.9L850.4,87.0L846.5,85.6L845.4,81.8L846.2,76.0M839.5,97.4L852.7,95.9M838.0,105.4L844.1,104.9L849.2,110.4L846.9,111.7M835.6,85.6L844.1,86.7L846.5,85.6M839.4,90.6L844.1,86.7M836.4,81.8L845.4,81.8M846.2,73.0L849.2,69.8L851.5,65.3L849.0,47.9M821.9,77.5L822.8,71.4L822.2,63.3L825.8,56.3L829.6,46.7L834.1,42.6M840.3,55.2L839.4,48.7L835.6,42.6M838.0,105.4L835.6,109.6L832.3,110.2L828.8,108.9M846.9,111.7L837.9,114.3L835.6,109.6M837.9,114.3L838.3,118.4L838.5,121.4M838.3,118.4L846.2,118.4M832.3,110.2L833.2,118.8M827.3,114.3L832.6,112.6M858.6,129.0L861.3,128.6L867.8,128.0L871.5,127.8L870.9,123.4L869.6,120.2L866.7,119.4M864.3,115.5L874.1,118.8L877.9,118.8M869.6,120.2L874.1,118.8M870.9,123.4L876.4,125.3M867.8,128.0L865.8,132.8L862.5,134.9L862.8,136.8L859.8,138.2L856.8,141.8M862.8,137.0L871.1,142.3L875.6,142.6M857.5,135.6L862.5,134.9M871.5,127.8L872.6,131.0L873.4,135.6L876.4,140.9M885.3,127.6L890.0,125.9L895.3,129.0L896.3,130.8L895.9,138.2L897.2,139.1L899.0,142.6L896.9,149.1M897.2,139.1L904.3,141.1L908.5,138.1L911.1,133.8L912.0,129.1L916.4,128.2M906.9,151.6L910.4,148.6L911.1,144.5L915.9,139.3L917.8,136.8L915.6,132.8L921.4,131.0M921.4,131.0L923.9,136.5L926.2,140.5L936.8,144.7L938.0,144.3L942.8,144.7L950.8,143.8L952.6,151.1L954.9,155.0L957.2,153.8L964.0,153.0L967.0,155.2M937.1,146.9L938.3,154.3M943.4,156.0L943.9,150.2L939.5,147.7M954.9,155.0L954.9,157.6L952.6,163.9L953.8,172.9M955.8,157.6L962.1,162.0L963.2,166.7L958.7,167.7M960.9,153.0L966.2,166.3L964.0,171.7M936.5,102.8L941.3,111.1L948.1,113.6L956.4,117.4L964.0,119.4L972.3,115.9L979.8,108.9L984.9,108.5L984.3,101.0M936.5,102.8L942.1,99.8L951.9,96.2L960.2,100.5L967.0,102.1L975.3,101.0L979.8,101.2L984.3,101.0L986.6,92.9L996.4,99.8L1001.7,106.0L1007.8,104.9L1001.7,112.2L1001.3,117.8M936.5,102.8L932.2,107.8L924.7,112.2L925.0,117.4L915.6,123.4L917.9,128.2L916.4,128.2M874.9,112.6L875.6,107.8L877.9,105.6L880.2,98.6L886.9,99.6L896.0,96.2L896.8,91.2L902.8,88.6L911.1,88.6L914.1,91.2L919.4,91.2L930.0,98.6L936.5,102.8M884.7,118.4L888.5,112.2L892.2,111.1L896.0,113.4L902.0,117.4L906.6,120.0L911.1,117.8L915.6,117.4L925.0,117.4M888.5,119.8L892.2,117.4L896.0,120.4L901.3,124.4L904.3,127.2M908.1,123.4L911.1,122.4L914.1,123.4L915.6,123.4M904.3,127.2L912.0,129.1M992.2,123.0L994.2,121.4L997.2,118.4L1001.3,117.8M992.6,126.7L997.9,125.3M956.9,178.6L957.9,179.3M969.4,185.4L974.5,186.9L977.5,182.4L980.6,181.9M1016.8,192.3L1016.8,202.2" fill="none" stroke="#6fa9e0" stroke-width="0.5"/><text x="559" y="122.5" text-anchor="middle" font-size="6.6" font-style="italic" letter-spacing="1.6" fill="#989da1">North</text><text x="559" y="133.8" text-anchor="middle" font-size="6.6" font-style="italic" letter-spacing="1.6" fill="#989da1">Pacific</text><text x="559" y="145.1" text-anchor="middle" font-size="6.6" font-style="italic" letter-spacing="1.6" fill="#989da1">Ocean</text><text x="749" y="113.0" text-anchor="middle" font-size="6.6" font-style="italic" letter-spacing="1.6" fill="#989da1">North</text><text x="749" y="124.3" text-anchor="middle" font-size="6.6" font-style="italic" letter-spacing="1.6" fill="#989da1">Atlantic</text><text x="749" y="135.6" text-anchor="middle" font-size="6.6" font-style="italic" letter-spacing="1.6" fill="#989da1">Ocean</text><text x="583" y="235.0" text-anchor="middle" font-size="6.6" font-style="italic" letter-spacing="1.6" fill="#989da1">South</text><text x="583" y="246.3" text-anchor="middle" font-size="6.6" font-style="italic" letter-spacing="1.6" fill="#989da1">Pacific</text><text x="583" y="257.6" text-anchor="middle" font-size="6.6" font-style="italic" letter-spacing="1.6" fill="#989da1">Ocean</text><text x="781.5" y="225.8" text-anchor="middle" font-size="6.6" font-style="italic" letter-spacing="1.6" fill="#989da1">South</text><text x="781.5" y="237.1" text-anchor="middle" font-size="6.6" font-style="italic" letter-spacing="1.6" fill="#989da1">Atlantic</text><text x="781.5" y="248.4" text-anchor="middle" font-size="6.6" font-style="italic" letter-spacing="1.6" fill="#989da1">Ocean</text><text x="925.5" y="222.0" text-anchor="middle" font-size="6.6" font-style="italic" letter-spacing="1.6" fill="#989da1">Indian</text><text x="925.5" y="233.3" text-anchor="middle" font-size="6.6" font-style="italic" letter-spacing="1.6" fill="#989da1">Ocean</text><text x="642.8" y="89.1" text-anchor="middle" font-size="4.9" fill="#707070" stroke="#fff" stroke-width="1.5" stroke-opacity="0.75" paint-order="stroke">Canada</text><text x="654.8" y="121.6" text-anchor="middle" font-size="4.9" fill="#707070" stroke="#fff" stroke-width="1.5" stroke-opacity="0.75" paint-order="stroke">United</text><text x="654.8" y="128.4" text-anchor="middle" font-size="4.9" fill="#707070" stroke="#fff" stroke-width="1.5" stroke-opacity="0.75" paint-order="stroke">States</text><text x="648" y="153.2" text-anchor="middle" font-size="4.9" fill="#707070" stroke="#fff" stroke-width="1.5" stroke-opacity="0.75" paint-order="stroke">Mexico</text><text x="800" y="89.6" text-anchor="middle" font-size="4.9" fill="#707070" stroke="#fff" stroke-width="1.5" stroke-opacity="0.75" paint-order="stroke">United</text><text x="800" y="95.0" text-anchor="middle" font-size="4.9" fill="#707070" stroke="#fff" stroke-width="1.5" stroke-opacity="0.75" paint-order="stroke">Kingdom</text><text x="804" y="107.0" text-anchor="middle" font-size="4.9" fill="#707070" stroke="#fff" stroke-width="1.5" stroke-opacity="0.75" paint-order="stroke">France</text><text x="795" y="139.1" text-anchor="middle" font-size="4.9" fill="#707070" stroke="#fff" stroke-width="1.5" stroke-opacity="0.75" paint-order="stroke">Morocco</text><text x="781.7" y="167.1" text-anchor="middle" font-size="4.9" fill="#707070" stroke="#fff" stroke-width="1.5" stroke-opacity="0.75" paint-order="stroke">Senegal</text><text x="803" y="163.9" text-anchor="middle" font-size="4.9" fill="#707070" stroke="#fff" stroke-width="1.5" stroke-opacity="0.75" paint-order="stroke">Mali</text><text x="692.7" y="184.4" text-anchor="middle" font-size="4.9" fill="#707070" stroke="#fff" stroke-width="1.5" stroke-opacity="0.75" paint-order="stroke">Venezuela</text><text x="689.7" y="206.7" text-anchor="middle" font-size="4.9" fill="#707070" stroke="#fff" stroke-width="1.5" stroke-opacity="0.75" paint-order="stroke">Peru</text><text x="724.8" y="205.8" text-anchor="middle" font-size="4.9" fill="#707070" stroke="#fff" stroke-width="1.5" stroke-opacity="0.75" paint-order="stroke">Brazil</text><text x="706.5" y="217.4" text-anchor="middle" font-size="4.9" fill="#707070" stroke="#fff" stroke-width="1.5" stroke-opacity="0.75" paint-order="stroke">Bolivia</text><text x="694.2" y="253.5" text-anchor="middle" font-size="4.9" fill="#707070" stroke="#fff" stroke-width="1.5" stroke-opacity="0.75" paint-order="stroke">Chile</text><text x="831.4" y="59.8" text-anchor="middle" font-size="4.9" fill="#707070" stroke="#fff" stroke-width="1.5" stroke-opacity="0.75" paint-order="stroke">Sweden</text><text x="818" y="72.3" text-anchor="middle" font-size="4.9" fill="#707070" stroke="#fff" stroke-width="1.5" stroke-opacity="0.75" paint-order="stroke">Norway</text><text x="951.5" y="69.6" text-anchor="middle" font-size="4.9" fill="#707070" stroke="#fff" stroke-width="1.5" stroke-opacity="0.75" paint-order="stroke">Russia</text><text x="851.4" y="104.9" text-anchor="middle" font-size="4.9" fill="#707070" stroke="#fff" stroke-width="1.5" stroke-opacity="0.75" paint-order="stroke">Ukraine</text><text x="906" y="107.0" text-anchor="middle" font-size="4.9" fill="#707070" stroke="#fff" stroke-width="1.5" stroke-opacity="0.75" paint-order="stroke">Kazakhstan</text><text x="960.9" y="109.7" text-anchor="middle" font-size="4.9" fill="#707070" stroke="#fff" stroke-width="1.5" stroke-opacity="0.75" paint-order="stroke">Mongolia</text><text x="898" y="121.2" text-anchor="middle" font-size="4.9" fill="#707070" stroke="#fff" stroke-width="1.5" stroke-opacity="0.75" paint-order="stroke">Uzbekistan</text><text x="820.7" y="119.0" text-anchor="middle" font-size="4.9" fill="#707070" stroke="#fff" stroke-width="1.5" stroke-opacity="0.75" paint-order="stroke">Italy</text><text x="856.7" y="125.7" text-anchor="middle" font-size="4.9" fill="#707070" stroke="#fff" stroke-width="1.5" stroke-opacity="0.75" paint-order="stroke">Turkey</text><text x="959.5" y="133.2" text-anchor="middle" font-size="4.9" fill="#707070" stroke="#fff" stroke-width="1.5" stroke-opacity="0.75" paint-order="stroke">China</text><text x="1014.3" y="131.9" text-anchor="middle" font-size="4.9" fill="#707070" stroke="#fff" stroke-width="1.5" stroke-opacity="0.75" paint-order="stroke">Japan</text><text x="886.1" y="138.3" text-anchor="middle" font-size="4.9" fill="#707070" stroke="#fff" stroke-width="1.5" stroke-opacity="0.75" paint-order="stroke">Iran</text><text x="868.7" y="138.3" text-anchor="middle" font-size="4.9" fill="#707070" stroke="#fff" stroke-width="1.5" stroke-opacity="0.75" paint-order="stroke">Iraq</text><text x="848.7" y="149.7" text-anchor="middle" font-size="4.9" fill="#707070" stroke="#fff" stroke-width="1.5" stroke-opacity="0.75" paint-order="stroke">Egypt</text><text x="871.4" y="149.7" text-anchor="middle" font-size="4.9" fill="#707070" stroke="#fff" stroke-width="1.5" stroke-opacity="0.75" paint-order="stroke">Saudi</text><text x="871.4" y="156.4" text-anchor="middle" font-size="4.9" fill="#707070" stroke="#fff" stroke-width="1.5" stroke-opacity="0.75" paint-order="stroke">Arabia</text><text x="922.1" y="156.4" text-anchor="middle" font-size="4.9" fill="#707070" stroke="#fff" stroke-width="1.5" stroke-opacity="0.75" paint-order="stroke">India</text><text x="849.5" y="169.2" text-anchor="middle" font-size="4.9" fill="#707070" stroke="#fff" stroke-width="1.5" stroke-opacity="0.75" paint-order="stroke">Sudan</text><text x="959.5" y="167.1" text-anchor="middle" font-size="4.9" fill="#707070" stroke="#fff" stroke-width="1.5" stroke-opacity="0.75" paint-order="stroke">Thailand</text><text x="991.6" y="172.4" text-anchor="middle" font-size="4.9" fill="#707070" stroke="#fff" stroke-width="1.5" stroke-opacity="0.75" paint-order="stroke">Philippines</text><text x="922" y="179.1" text-anchor="middle" font-size="4.9" fill="#707070" stroke="#fff" stroke-width="1.5" stroke-opacity="0.75" paint-order="stroke">Sri Lanka</text><text x="822.2" y="183.8" text-anchor="middle" font-size="4.9" fill="#707070" stroke="#fff" stroke-width="1.5" stroke-opacity="0.75" paint-order="stroke">Cameroon</text><text x="860.4" y="189.9" text-anchor="middle" font-size="4.9" fill="#707070" stroke="#fff" stroke-width="1.5" stroke-opacity="0.75" paint-order="stroke">Kenya</text><text x="857.3" y="200.6" text-anchor="middle" font-size="4.9" fill="#707070" stroke="#fff" stroke-width="1.5" stroke-opacity="0.75" paint-order="stroke">Tanzania</text><text x="831.4" y="209.8" text-anchor="middle" font-size="4.9" fill="#707070" stroke="#fff" stroke-width="1.5" stroke-opacity="0.75" paint-order="stroke">Angola</text><text x="829.9" y="223.5" text-anchor="middle" font-size="4.9" fill="#707070" stroke="#fff" stroke-width="1.5" stroke-opacity="0.75" paint-order="stroke">Namibia</text><text x="874.1" y="221.1" text-anchor="middle" font-size="4.9" fill="#707070" stroke="#fff" stroke-width="1.5" stroke-opacity="0.75" paint-order="stroke">Madagascar</text><text x="840.5" y="236.4" text-anchor="middle" font-size="4.9" fill="#707070" stroke="#fff" stroke-width="1.5" stroke-opacity="0.75" paint-order="stroke">South Africa</text><text x="959.7" y="184.4" text-anchor="middle" font-size="4.9" fill="#707070" stroke="#fff" stroke-width="1.5" stroke-opacity="0.75" paint-order="stroke">Malaysia</text><text x="981" y="194.5" text-anchor="middle" font-size="4.9" fill="#707070" stroke="#fff" stroke-width="1.5" stroke-opacity="0.75" paint-order="stroke">Indonesia</text><text x="1025.3" y="197.6" text-anchor="middle" font-size="4.9" fill="#707070" stroke="#fff" stroke-width="1.5" stroke-opacity="0.75" paint-order="stroke">Papua New</text><text x="1025.3" y="202.1" text-anchor="middle" font-size="4.9" fill="#707070" stroke="#fff" stroke-width="1.5" stroke-opacity="0.75" paint-order="stroke">Guinea</text><text x="1008.5" y="231.2" text-anchor="middle" font-size="4.9" fill="#707070" stroke="#fff" stroke-width="1.5" stroke-opacity="0.75" paint-order="stroke">Australia</text><text x="1066.6" y="258.0" text-anchor="middle" font-size="4.9" fill="#707070" stroke="#fff" stroke-width="1.5" stroke-opacity="0.75" paint-order="stroke">New</text><text x="1066.6" y="263.2" text-anchor="middle" font-size="4.9" fill="#707070" stroke="#fff" stroke-width="1.5" stroke-opacity="0.75" paint-order="stroke">Zealand</text><circle cx="807.2" cy="119.7" r="6.9" fill="#fff" stroke="#3a4a6b" stroke-width="1.4"/><text x="807.5" y="121.7" text-anchor="middle" font-size="5.6" fill="#444">1+</text><circle cx="713.8" cy="242.6" r="6.9" fill="#fff" stroke="#3a4a6b" stroke-width="1.4"/><text x="714.0999999999999" y="244.6" text-anchor="middle" font-size="5.6" fill="#444">1+</text><circle cx="554.3" cy="312.2" r="4.6" fill="#fff" stroke="#8f8f8f" stroke-width="0.8"/><circle cx="554.3" cy="312.2" r="2.5" fill="#8a8a8a"/><circle cx="554.8" cy="311.7" r="1" fill="#ddd"/><text x="560.5" y="315.2" font-size="8" font-weight="bold" fill="#fff" stroke="#999" stroke-width="0.6" paint-order="stroke" letter-spacing="-0.2">mapbox</text><rect x="917.5" y="304.4" width="153" height="12.2" rx="2" fill="#121a3d"/><text x="920" y="312.8" font-size="6.4" fill="#fff" letter-spacing="0.056">There are 3.08k events without location information</text></svg></div><div class="abs" style="left:4.8px;top:330.2px;width:1070.6px;height:200px;background:#fff"></div><div class="abs" style="left:4.8px;top:330.2px;width:1070.6px;height:22.6px;background:#1f2f65"></div><div class="t" style="top:338.57px;font-size:7.6px;color:#fff;left:24.00px;letter-spacing:-0.053px;-webkit-text-stroke:0.15px #fff;">Date (PST</div><svg class="abs" style="left:61.5px;top:339.5px" width="6" height="5" viewBox="0 0 6 5"><path d="M0.3,0.8 L5.2,0.8 L2.75,3.8Z" fill="#fff"/></svg><div class="t" style="top:338.57px;font-size:7.6px;color:#fff;left:67.20px;">)</div><div class="t" style="top:338.57px;font-size:7.6px;color:#fff;left:149.50px;letter-spacing:-0.306px;-webkit-text-stroke:0.15px #fff;">Service</div><div class="t" style="top:338.57px;font-size:7.6px;color:#fff;left:204.00px;letter-spacing:-0.187px;-webkit-text-stroke:0.15px #fff;">Actor ...</div><div class="t" style="top:338.57px;font-size:7.6px;color:#fff;left:237.80px;letter-spacing:-0.219px;-webkit-text-stroke:0.15px #fff;">Type</div><div class="t" style="top:338.57px;font-size:7.6px;color:#fff;left:347.80px;letter-spacing:-0.127px;-webkit-text-stroke:0.15px #fff;">Event</div><div class="t" style="top:338.57px;font-size:7.6px;color:#fff;left:623.90px;letter-spacing:-0.259px;-webkit-text-stroke:0.15px #fff;">IP address</div><div class="t" style="top:338.57px;font-size:7.6px;color:#fff;left:753.90px;letter-spacing:-0.017px;-webkit-text-stroke:0.15px #fff;">Location</div><div class="t" style="top:338.57px;font-size:7.6px;color:#fff;left:907.40px;letter-spacing:-0.249px;-webkit-text-stroke:0.15px #fff;">ISP</div><div class="hdiv" style="left:128.9px"></div><div class="hdiv" style="left:199.3px"></div><div class="hdiv" style="left:232.6px"></div><div class="hdiv" style="left:342.4px"></div><div class="hdiv" style="left:618.5px"></div><div class="hdiv" style="left:733.6px"></div><div class="hdiv" style="left:903px"></div><svg class="abs" style="left:133.8px;top:336.6px" width="11" height="11" viewBox="-5.5 -5.5 11 11"><circle r="3.7" fill="none" stroke="#cdd3e3" stroke-width="1.7" stroke-dasharray="1.3 0.9"/><circle r="2.7" fill="#cdd3e3"/><circle r="1.1" fill="#1f2f65"/></svg><svg class="abs" style="left:738.3px;top:336.3px" width="12" height="12" viewBox="-6 -6 12 12"><circle r="5.4" fill="#e3e7f0"/><path d="M-4.8,-1.5 C-3,-3.5 -1,-4 -0.5,-2 C0,-0.5 -2.5,0 -1.5,2 C-0.8,3.5 -2,4.5 -2.5,4.8 C-4.5,3.5 -5.4,1 -4.8,-1.5Z M1.5,-5 C3.5,-4.5 5,-2.5 5.3,0 C4,0.5 3.5,-0.8 2.2,-0.5 C1,-1.5 2,-3 1.5,-5Z M1.5,2 C2.5,1.5 3.5,2 4.2,3 C3.3,4.3 2,5 1,5.2 C1.5,4 0.8,3 1.5,2Z" fill="#1f2f65"/></svg><svg class="abs" style="left:1059.6px;top:336.6px" width="11" height="11" viewBox="-5.5 -5.5 11 11"><circle r="4.1" fill="none" stroke="#2f8ce8" stroke-width="2.3" stroke-dasharray="1.55 1.0"/><circle r="3.1" fill="#2f8ce8"/><circle r="1.3" fill="#1f2f65"/></svg><div class="rsep" style="top:378.5px"></div><div class="rsep" style="top:404.2px"></div><div class="rsep" style="top:435.0px"></div><div class="rsep" style="top:463.8px"></div><div class="rsep" style="top:492.9px"></div><svg class="abs" style="left:10px;top:363.8px" width="4" height="5" viewBox="0 0 4 5"><path d="M0,0.3 L3,2.2 L0,4.1Z" fill="#333"/></svg><div class="t" style="top:363.15px;font-size:7.5px;color:#3f3f3f;left:24.30px;letter-spacing:-0.12px;-webkit-text-stroke:0.12px currentColor;">Jan 14, 2020 13:33:31 PST</div><svg class="abs" style="left:134.2px;top:362.2px" width="10" height="10" viewBox="-5 -5 10 10"><path d="M3.3,-2.3 A3.7,3.7 0 0 0 -3.2,-1.7" fill="none" stroke="#ea4335" stroke-width="1.5"/><path d="M-3.2,-1.8 A3.7,3.7 0 0 0 -3.2,1.8" fill="none" stroke="#fbbc05" stroke-width="1.5"/><path d="M-3.2,1.7 A3.7,3.7 0 0 0 3,2.2" fill="none" stroke="#34a853" stroke-width="1.5"/><path d="M2.9,2.3 A3.7,3.7 0 0 0 3.7,0 L0.2,0" fill="none" stroke="#4285f4" stroke-width="1.5"/></svg><div class="t" style="top:363.15px;font-size:7.5px;color:#3f3f3f;left:149.10px;letter-spacing:-0.12px;-webkit-text-stroke:0.12px currentColor;">G Suite</div><div class="t" style="top:363.15px;font-size:7.5px;color:#3f3f3f;left:237.80px;letter-spacing:-0.12px;-webkit-text-stroke:0.12px currentColor;">view</div><div class="t" style="top:363.15px;font-size:7.5px;color:#444;left:347.80px;letter-spacing:-0.12px;-webkit-text-stroke:0.12px currentColor;"><span class="lnk">Mauro G</span><span style="position:absolute;left:45px;top:0">viewed document <span class="lnk">user_race_condition.mov</span> owned by <span class="lnk">James</span></span></div><div class="t" style="top:363.15px;font-size:7.5px;color:#5b9bdb;left:623.90px;letter-spacing:-0.12px;-webkit-text-stroke:0.12px currentColor;">152.169.</div><svg class="abs" style="left:739px;top:362.2px" width="10.5" height="10" viewBox="0 0 10.5 10"><rect x="0" y="0" width="10.5" height="10" rx="2" fill="#8cc2f0"/><rect x="0" y="3.4" width="10.5" height="3.2" fill="#fff"/></svg><div class="t" style="top:363.15px;font-size:7.5px;color:#5b9bdb;left:754.40px;letter-spacing:-0.12px;-webkit-text-stroke:0.12px currentColor;">Buenos Aires, Buenos Aires F.D., Argentina</div><div class="t" style="top:363.15px;font-size:7.5px;color:#3f3f3f;left:908.00px;letter-spacing:-0.12px;-webkit-text-stroke:0.12px currentColor;">Telecom Argentina s.A.</div><svg class="abs" style="left:10px;top:389.4px" width="4" height="5" viewBox="0 0 4 5"><path d="M0,0.3 L3,2.2 L0,4.1Z" fill="#333"/></svg><div class="t" style="top:388.75px;font-size:7.5px;color:#3f3f3f;left:24.30px;letter-spacing:-0.12px;-webkit-text-stroke:0.12px currentColor;">Jan 14, 2020 08:50:47 PST</div><svg class="abs" style="left:134.2px;top:387.8px" width="10" height="10" viewBox="-5 -5 10 10"><path d="M3.3,-2.3 A3.7,3.7 0 0 0 -3.2,-1.7" fill="none" stroke="#ea4335" stroke-width="1.5"/><path d="M-3.2,-1.8 A3.7,3.7 0 0 0 -3.2,1.8" fill="none" stroke="#fbbc05" stroke-width="1.5"/><path d="M-3.2,1.7 A3.7,3.7 0 0 0 3,2.2" fill="none" stroke="#34a853" stroke-width="1.5"/><path d="M2.9,2.3 A3.7,3.7 0 0 0 3.7,0 L0.2,0" fill="none" stroke="#4285f4" stroke-width="1.5"/></svg><div class="t" style="top:388.75px;font-size:7.5px;color:#3f3f3f;left:149.10px;letter-spacing:-0.12px;-webkit-text-stroke:0.12px currentColor;">G Suite</div><div class="t" style="top:388.75px;font-size:7.5px;color:#3f3f3f;left:237.80px;letter-spacing:-0.12px;-webkit-text-stroke:0.12px currentColor;">login_success</div><div class="t" style="top:388.75px;font-size:7.5px;color:#444;left:347.80px;letter-spacing:-0.12px;-webkit-text-stroke:0.12px currentColor;"><span class="lnk">Mauro G</span><span style="position:absolute;left:45px;top:0">logged in successfully to <span class="lnk">C01ndz58s</span></span></div><div class="t" style="top:388.75px;font-size:7.5px;color:#5b9bdb;left:623.90px;letter-spacing:-0.12px;-webkit-text-stroke:0.12px currentColor;">152.169.</div><svg class="abs" style="left:739px;top:387.8px" width="10.5" height="10" viewBox="0 0 10.5 10"><rect x="0" y="0" width="10.5" height="10" rx="2" fill="#8cc2f0"/><rect x="0" y="3.4" width="10.5" height="3.2" fill="#fff"/></svg><div class="t" style="top:388.75px;font-size:7.5px;color:#5b9bdb;left:754.40px;letter-spacing:-0.12px;-webkit-text-stroke:0.12px currentColor;">Buenos Aires, Buenos Aires F.D., Argentina</div><div class="t" style="top:388.75px;font-size:7.5px;color:#3f3f3f;left:908.00px;letter-spacing:-0.12px;-webkit-text-stroke:0.12px currentColor;">Telecom Argentina s.A.</div><svg class="abs" style="left:10px;top:418.2px" width="4" height="5" viewBox="0 0 4 5"><path d="M0,0.3 L3,2.2 L0,4.1Z" fill="#333"/></svg><div class="t" style="top:417.55px;font-size:7.5px;color:#3f3f3f;left:24.30px;letter-spacing:-0.12px;-webkit-text-stroke:0.12px currentColor;">Jan 14, 2020 08:50:47 PST</div><svg class="abs" style="left:134.2px;top:416.6px" width="10" height="10" viewBox="-5 -5 10 10"><path d="M3.3,-2.3 A3.7,3.7 0 0 0 -3.2,-1.7" fill="none" stroke="#ea4335" stroke-width="1.5"/><path d="M-3.2,-1.8 A3.7,3.7 0 0 0 -3.2,1.8" fill="none" stroke="#fbbc05" stroke-width="1.5"/><path d="M-3.2,1.7 A3.7,3.7 0 0 0 3,2.2" fill="none" stroke="#34a853" stroke-width="1.5"/><path d="M2.9,2.3 A3.7,3.7 0 0 0 3.7,0 L0.2,0" fill="none" stroke="#4285f4" stroke-width="1.5"/></svg><div class="t" style="top:417.55px;font-size:7.5px;color:#3f3f3f;left:149.10px;letter-spacing:-0.12px;-webkit-text-stroke:0.12px currentColor;">G Suite</div><div class="t" style="top:417.55px;font-size:7.5px;color:#3f3f3f;left:237.80px;letter-spacing:-0.12px;-webkit-text-stroke:0.12px currentColor;">authorize</div><div class="t" style="top:410.55px;font-size:7.5px;color:#444;left:347.80px;letter-spacing:-0.12px;-webkit-text-stroke:0.12px currentColor;">The application <span class="lnk">Google Chrome</span> was authorized to make delegated API calls as</div><div class="t" style="top:423.45px;font-size:7.5px;color:#444;left:347.80px;letter-spacing:-0.12px;-webkit-text-stroke:0.12px currentColor;">user <span class="lnk">Mauro G</span><span style="position:absolute;left:61.1px;top:0">by <span class="lnk">C01ndz58s</span></span></div><div class="t" style="top:417.55px;font-size:7.5px;color:#5b9bdb;left:623.90px;letter-spacing:-0.12px;-webkit-text-stroke:0.12px currentColor;">152.169.</div><svg class="abs" style="left:739px;top:416.6px" width="10.5" height="10" viewBox="0 0 10.5 10"><rect x="0" y="0" width="10.5" height="10" rx="2" fill="#8cc2f0"/><rect x="0" y="3.4" width="10.5" height="3.2" fill="#fff"/></svg><div class="t" style="top:417.55px;font-size:7.5px;color:#5b9bdb;left:754.40px;letter-spacing:-0.12px;-webkit-text-stroke:0.12px currentColor;">Buenos Aires, Buenos Aires F.D., Argentina</div><div class="t" style="top:417.55px;font-size:7.5px;color:#3f3f3f;left:908.00px;letter-spacing:-0.12px;-webkit-text-stroke:0.12px currentColor;">Telecom Argentina s.A.</div><svg class="abs" style="left:10px;top:447.4px" width="4" height="5" viewBox="0 0 4 5"><path d="M0,0.3 L3,2.2 L0,4.1Z" fill="#333"/></svg><div class="t" style="top:446.75px;font-size:7.5px;color:#3f3f3f;left:24.30px;letter-spacing:-0.12px;-webkit-text-stroke:0.12px currentColor;">Jan 14, 2020 05:39:08 PST</div><svg class="abs" style="left:134.2px;top:445.8px" width="10" height="10" viewBox="-5 -5 10 10"><path d="M3.3,-2.3 A3.7,3.7 0 0 0 -3.2,-1.7" fill="none" stroke="#ea4335" stroke-width="1.5"/><path d="M-3.2,-1.8 A3.7,3.7 0 0 0 -3.2,1.8" fill="none" stroke="#fbbc05" stroke-width="1.5"/><path d="M-3.2,1.7 A3.7,3.7 0 0 0 3,2.2" fill="none" stroke="#34a853" stroke-width="1.5"/><path d="M2.9,2.3 A3.7,3.7 0 0 0 3.7,0 L0.2,0" fill="none" stroke="#4285f4" stroke-width="1.5"/></svg><div class="t" style="top:446.75px;font-size:7.5px;color:#3f3f3f;left:149.10px;letter-spacing:-0.12px;-webkit-text-stroke:0.12px currentColor;">G Suite</div><div class="t" style="top:446.75px;font-size:7.5px;color:#3f3f3f;left:237.80px;letter-spacing:-0.12px;-webkit-text-stroke:0.12px currentColor;">view</div><div class="t" style="top:446.75px;font-size:7.5px;color:#444;left:347.80px;letter-spacing:-0.12px;-webkit-text-stroke:0.12px currentColor;"><span class="lnk">Franc</span><span style="position:absolute;left:68.6px;top:0">viewed document <span class="lnk">usage_issue.mov</span> owned by <span class="lnk">James</span></span></div><div class="t" style="top:446.75px;font-size:7.5px;color:#5b9bdb;left:623.90px;letter-spacing:-0.12px;-webkit-text-stroke:0.12px currentColor;">88.9.</div><svg class="abs" style="left:739px;top:445.8px" width="10.5" height="10" viewBox="0 0 10.5 10"><rect x="0" y="0" width="10.5" height="10" rx="2" fill="#d8402c"/><rect x="0" y="2.8" width="10.5" height="4.4" fill="#f6c12e"/></svg><div class="t" style="top:446.75px;font-size:7.5px;color:#5b9bdb;left:754.40px;letter-spacing:-0.12px;-webkit-text-stroke:0.12px currentColor;">Barcelona, Catalonia, Spain</div><div class="t" style="top:446.75px;font-size:7.5px;color:#3f3f3f;left:908.00px;letter-spacing:-0.12px;-webkit-text-stroke:0.12px currentColor;">Telefonica De Espana</div><svg class="abs" style="left:10px;top:476.3px" width="4" height="5" viewBox="0 0 4 5"><path d="M0,0.3 L3,2.2 L0,4.1Z" fill="#333"/></svg><div class="t" style="top:475.65px;font-size:7.5px;color:#3f3f3f;left:24.30px;letter-spacing:-0.12px;-webkit-text-stroke:0.12px currentColor;">Jan 14, 2020 04:20:50 PST</div><svg class="abs" style="left:134.2px;top:474.7px" width="10" height="10" viewBox="-5 -5 10 10"><path d="M3.3,-2.3 A3.7,3.7 0 0 0 -3.2,-1.7" fill="none" stroke="#ea4335" stroke-width="1.5"/><path d="M-3.2,-1.8 A3.7,3.7 0 0 0 -3.2,1.8" fill="none" stroke="#fbbc05" stroke-width="1.5"/><path d="M-3.2,1.7 A3.7,3.7 0 0 0 3,2.2" fill="none" stroke="#34a853" stroke-width="1.5"/><path d="M2.9,2.3 A3.7,3.7 0 0 0 3.7,0 L0.2,0" fill="none" stroke="#4285f4" stroke-width="1.5"/></svg><div class="t" style="top:475.65px;font-size:7.5px;color:#3f3f3f;left:149.10px;letter-spacing:-0.12px;-webkit-text-stroke:0.12px currentColor;">G Suite</div><div class="t" style="top:475.65px;font-size:7.5px;color:#3f3f3f;left:237.80px;letter-spacing:-0.12px;-webkit-text-stroke:0.12px currentColor;">view</div><div class="t" style="top:469.15px;font-size:7.5px;color:#444;left:347.80px;letter-spacing:-0.12px;-webkit-text-stroke:0.12px currentColor;"><span class="lnk">Lautaro</span><span style="position:absolute;left:58.9px;top:0">viewed document <span class="lnk">activity_slowness_datepicker.mov</span> owned by</span></div><div class="t" style="top:481.95px;font-size:7.5px;color:#444;left:347.80px;letter-spacing:-0.12px;-webkit-text-stroke:0.12px currentColor;"><span class="lnk">James</span></div><div class="t" style="top:475.65px;font-size:7.5px;color:#5b9bdb;left:623.90px;letter-spacing:-0.12px;-webkit-text-stroke:0.12px currentColor;">181.228.</div><svg class="abs" style="left:739px;top:474.7px" width="10.5" height="10" viewBox="0 0 10.5 10"><rect x="0" y="0" width="10.5" height="10" rx="2" fill="#8cc2f0"/><rect x="0" y="3.4" width="10.5" height="3.2" fill="#fff"/></svg><div class="t" style="top:475.65px;font-size:7.5px;color:#5b9bdb;left:754.40px;letter-spacing:-0.12px;-webkit-text-stroke:0.12px currentColor;">Paraná, Entre Rios, Argentina</div><div class="t" style="top:475.65px;font-size:7.5px;color:#3f3f3f;left:908.00px;letter-spacing:-0.12px;-webkit-text-stroke:0.12px currentColor;">Telecom Argentina s.A.</div><svg class="abs" style="left:10px;top:508.0px" width="4" height="5" viewBox="0 0 4 5"><path d="M0,0.3 L3,2.2 L0,4.1Z" fill="#333"/></svg><div class="t" style="top:507.35px;font-size:7.5px;color:#3f3f3f;left:24.30px;letter-spacing:-0.12px;-webkit-text-stroke:0.12px currentColor;">Jan 13, 2020 09:53:53 PST</div><svg class="abs" style="left:134.2px;top:506.4px" width="10" height="10" viewBox="-5 -5 10 10"><path d="M3.3,-2.3 A3.7,3.7 0 0 0 -3.2,-1.7" fill="none" stroke="#ea4335" stroke-width="1.5"/><path d="M-3.2,-1.8 A3.7,3.7 0 0 0 -3.2,1.8" fill="none" stroke="#fbbc05" stroke-width="1.5"/><path d="M-3.2,1.7 A3.7,3.7 0 0 0 3,2.2" fill="none" stroke="#34a853" stroke-width="1.5"/><path d="M2.9,2.3 A3.7,3.7 0 0 0 3.7,0 L0.2,0" fill="none" stroke="#4285f4" stroke-width="1.5"/></svg><div class="t" style="top:507.35px;font-size:7.5px;color:#3f3f3f;left:149.10px;letter-spacing:-0.12px;-webkit-text-stroke:0.12px currentColor;">G Suite</div><div class="t" style="top:507.35px;font-size:7.5px;color:#3f3f3f;left:237.80px;letter-spacing:-0.12px;-webkit-text-stroke:0.12px currentColor;">view</div><div class="t" style="top:500.65px;font-size:7.5px;color:#444;left:347.80px;letter-spacing:-0.12px;-webkit-text-stroke:0.12px currentColor;"><span class="lnk">Franc</span><span style="position:absolute;left:68.6px;top:0">viewed document</span></div><div class="t" style="top:512.95px;font-size:7.5px;color:#444;left:347.80px;letter-spacing:-0.12px;-webkit-text-stroke:0.12px currentColor;"><span class="lnk">Analytics Technical Implementatin Research</span> owned by</div><div class="t" style="top:507.35px;font-size:7.5px;color:#5b9bdb;left:623.90px;letter-spacing:-0.12px;-webkit-text-stroke:0.12px currentColor;">88.9.</div><svg class="abs" style="left:739px;top:506.4px" width="10.5" height="10" viewBox="0 0 10.5 10"><rect x="0" y="0" width="10.5" height="10" rx="2" fill="#d8402c"/><rect x="0" y="2.8" width="10.5" height="4.4" fill="#f6c12e"/></svg><div class="t" style="top:507.35px;font-size:7.5px;color:#5b9bdb;left:754.40px;letter-spacing:-0.12px;-webkit-text-stroke:0.12px currentColor;">Barcelona, Catalonia, Spain</div><div class="t" style="top:507.35px;font-size:7.5px;color:#3f3f3f;left:908.00px;letter-spacing:-0.12px;-webkit-text-stroke:0.12px currentColor;">Telefonica De Espana</div></body></html>
